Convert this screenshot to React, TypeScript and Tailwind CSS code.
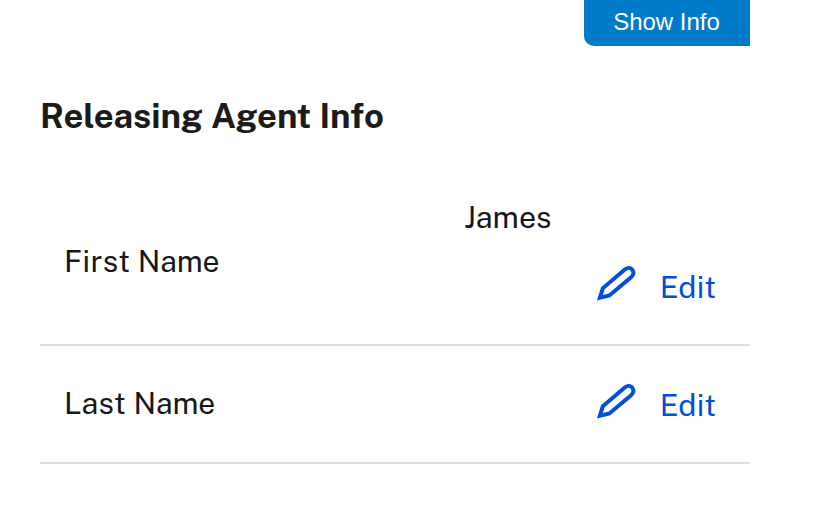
import React from "react";

function Edit() {
  return (
    <a className="flex items-start text-[#0050d8]">
      <svg className="mr-6 h-9 w-10" viewBox="0 0 40 36" fill="none" stroke="currentColor" strokeWidth="4">
        <path d="M3.9 31.7 L6.8 22.3 L28.8 3.6 C31.4 1.4 34.3 1.5 36 3.4 C38.3 6 37.6 9 35.1 11.2 L13.4 29.5 Z" />
      </svg>
      <span className="-mt-px">Edit</span>
    </a>
  );
}

function Label({ first, second }: { first: string; second: string }) {
  return (
    <>
      <span className="tracking-[0.4px]">{first}</span>{" "}
      <span className="text-[30px] tracking-[-0.1px]">{second}</span>
    </>
  );
}

export default function App() {
  return (
    <main className="h-[506px] w-[840px] overflow-hidden bg-white pl-10 pr-[90px] font-['Public_Sans','Inter',sans-serif] text-[#171717]">
      <div className="flex h-[46px] justify-end">
        <button className="h-[46px] w-[166px] rounded-bl-[10px] bg-[#007bc9] pb-[2px] pr-px font-['Liberation_Sans',sans-serif] text-2xl text-white">Show Info</button>
      </div>
      <h2 className="mt-[48px] h-[44px] text-[34.6px] font-bold leading-[44px] text-[#1b1b1b] [word-spacing:0.5px]">Releasing Agent Info</h2>
      <div className="mt-[36px] flex h-[172px] border-b-2 border-[#dfdfdf] text-[30.4px] leading-[44px]">
        <div className="w-[424px] pl-6 pt-[65px]"><Label first="First" second="Name" /></div>
        <div className="flex-1 pt-[21px]"><div>James</div><div className="mt-[27px] flex justify-end pr-[34px]"><Edit /></div></div>
      </div>
      <div className="flex h-[118px] border-b-2 border-[#dfdfdf] text-[30.4px] leading-[44px]">
        <div className="w-[424px] pl-6 pt-[35px]"><Label first="Last" second="Name" /></div>
        <div className="flex flex-1 items-start justify-end pr-[34px] pt-[38px]"><Edit /></div>
      </div>
    </main>
  );
}
